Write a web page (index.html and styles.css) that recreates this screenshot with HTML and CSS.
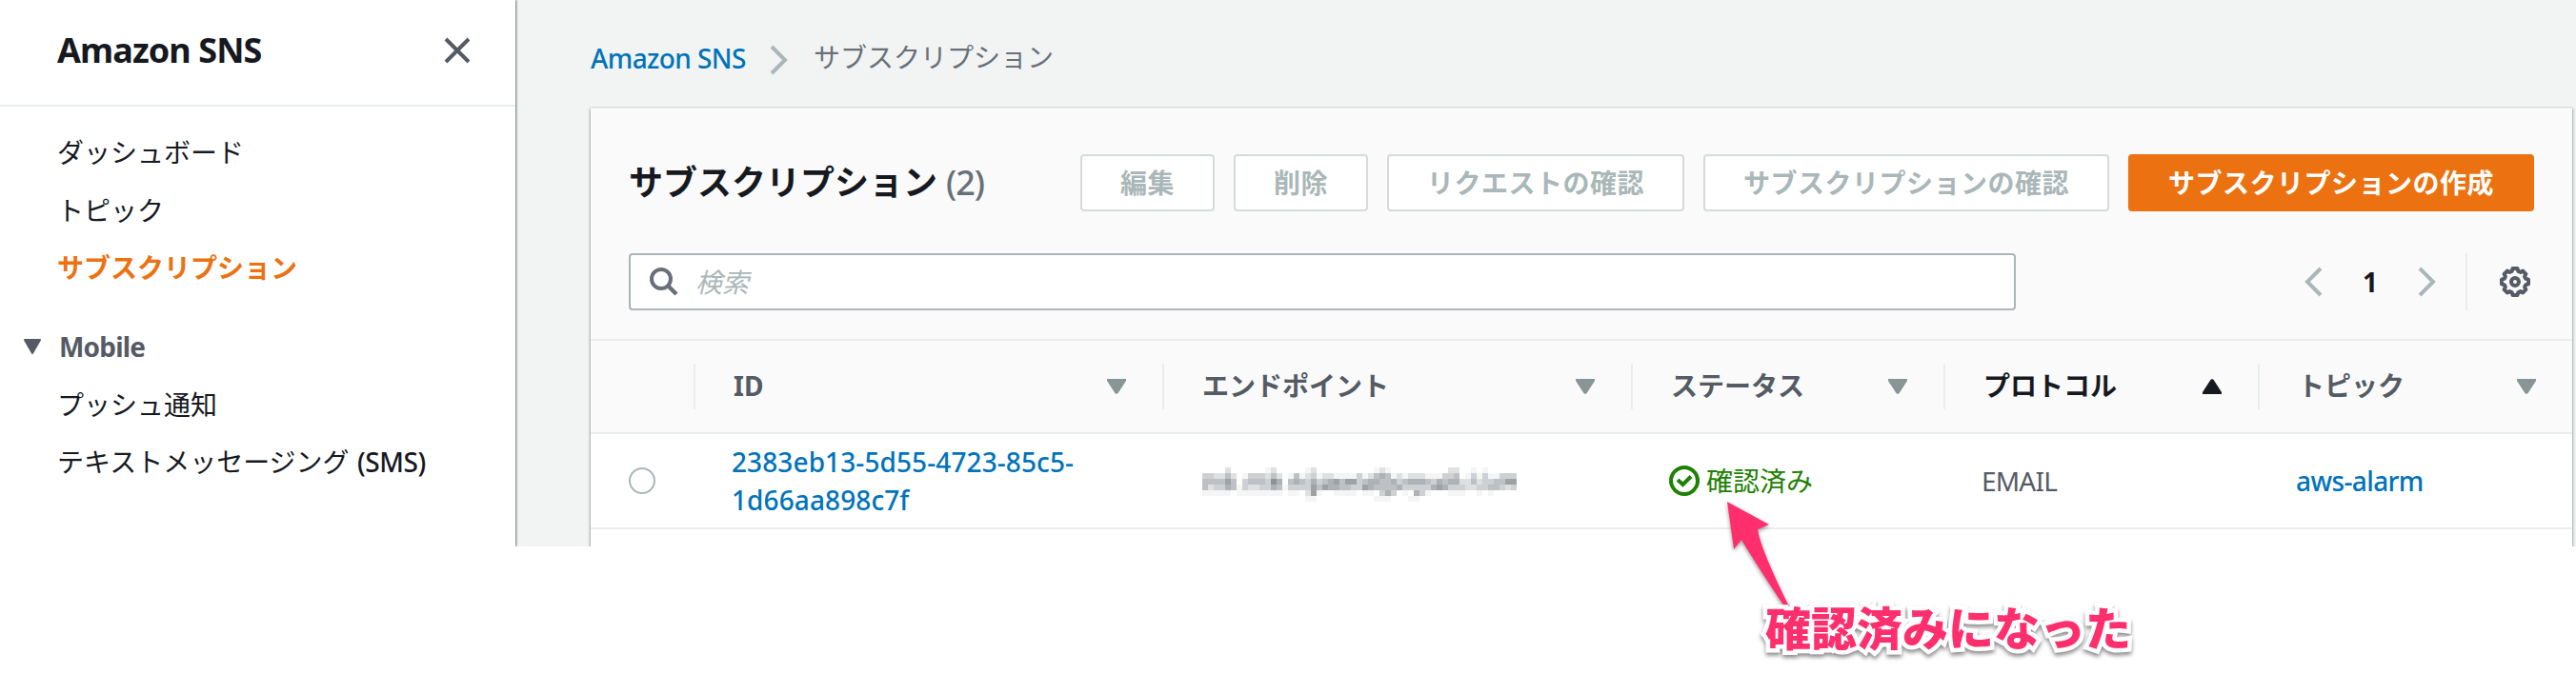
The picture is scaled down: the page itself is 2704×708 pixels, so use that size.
FILE: index.html
```
<!DOCTYPE html>
<html lang="ja">
<head>
<meta charset="utf-8">
<title>Amazon SNS</title>
<link rel="stylesheet" href="styles.css">
</head>
<body>
<div class="app">
  <nav class="sidebar">
    <div class="sidebar-head">
      <span class="service">Amazon SNS</span>
      <svg class="close" width="28" height="28" viewBox="0 0 28 28"><path d="M2 2L26 26M26 2L2 26" fill="none" stroke="#545b64" stroke-width="4"/></svg>
    </div>
    <ul class="nav">
      <li>ダッシュボード</li>
      <li>トピック</li>
      <li class="active">サブスクリプション</li>
    </ul>
    <div class="group">
      <svg width="20" height="16" viewBox="0 0 20 16"><path d="M2 1H18L10 15Z" fill="#545b64" stroke="#545b64" stroke-width="2" stroke-linejoin="round"/></svg>
      <span>Mobile</span>
    </div>
    <ul class="nav sub">
      <li>プッシュ通知</li>
      <li>テキストメッセージング <span class="latin">(SMS)</span></li>
    </ul>
  </nav>
  <main class="main">
    <div class="crumbs">
      <a class="crumb-link">Amazon SNS</a>
      <svg class="crumb-sep" width="20" height="32" viewBox="0 0 20 32"><path d="M2 2L16 16L2 30" fill="none" stroke="#aab7b8" stroke-width="4"/></svg>
      <span>サブスクリプション</span>
    </div>
    <section class="panel">
      <div class="panel-head">
        <h1>サブスクリプション<span class="count">(2)</span></h1>
        <div class="actions">
          <button class="btn edit">編集</button>
          <button class="btn">削除</button>
          <button class="btn">リクエストの確認</button>
          <button class="btn">サブスクリプションの確認</button>
          <button class="btn primary">サブスクリプションの作成</button>
        </div>
      </div>
      <div class="tools">
        <div class="search">
          <svg width="32" height="32" viewBox="0 0 32 32"><circle cx="13" cy="13" r="10" fill="none" stroke="#687078" stroke-width="4"/><path d="M20 20L29 29" stroke="#687078" stroke-width="4.4"/></svg>
          <span>検索</span>
        </div>
        <div class="pager">
          <svg width="20" height="32" viewBox="0 0 20 32"><path d="M18 2L4 16L18 30" fill="none" stroke="#aab7b8" stroke-width="4"/></svg>
          <b>1</b>
          <svg width="20" height="32" viewBox="0 0 20 32"><path d="M2 2L16 16L2 30" fill="none" stroke="#aab7b8" stroke-width="4"/></svg>
        </div>
        <div class="prefs">
          <svg width="32" height="32" viewBox="0 0 32 32" fill="none" stroke="#545b64"><path stroke-width="4" stroke-linejoin="round" d="M13.6 2H18.4L19.4 5L21.6 5.9L24.2 4.6L27.4 7.8L26.1 10.4L27 12.6L30 13.6V18.4L27 19.4L26.1 21.6L27.4 24.2L24.2 27.4L21.6 26.1L19.4 27L18.4 30H13.6L12.6 27L10.4 26.1L7.8 27.4L4.6 24.2L5.9 21.6L5 19.4L2 18.4V13.6L5 12.6L5.9 10.4L4.6 7.8L7.8 4.6L10.4 5.9L12.6 5Z"/><circle cx="16" cy="16" r="4" stroke-width="4"/></svg>
        </div>
      </div>
      <div class="grid thead">
        <div></div>
        <div class="th"><span>ID</span><i class="tri"></i></div>
        <div class="th"><span>エンドポイント</span><i class="tri"></i></div>
        <div class="th"><span>ステータス</span><i class="tri"></i></div>
        <div class="th sorted"><span>プロトコル</span><i class="tri up"></i></div>
        <div class="th last"><span>トピック</span><i class="tri"></i></div>
      </div>
      <div class="grid row">
        <div class="pick"><span class="radio"></span></div>
        <div class="td id"><a>2383eb13-5d55-4723-85c5-<br>1d66aa898c7f</a></div>
        <div class="td"><svg class="mosaic" width="348" height="48" viewBox="0 0 348 48" shape-rendering="crispEdges"></svg></div>
        <div class="td status">
          <svg width="32" height="32" viewBox="0 0 32 32" fill="none" stroke="#1d8102" stroke-width="4"><circle cx="16" cy="16" r="14"/><path d="M9 15L14.5 20L23 11.5"/></svg>
          <span>確認済み</span>
        </div>
        <div class="td email">EMAIL</div>
        <div class="td topic"><a>aws-alarm</a></div>
      </div>
    </section>
  </main>
</div>
<svg class="arrow" width="90" height="120" viewBox="0 0 90 120"><path d="M13 7L57 31L45 36Q48 57 79 119Q78 123 75 120Q46 77 28 47L20 57Z" fill="#ff2f6e"/></svg>
<div class="note">確認済みになった</div>
<script src="mosaic.js"></script>
</body>
</html>
```
FILE: styles.css
```
* { box-sizing: border-box; }
body {
  margin: 0;
  position: relative;
  width: 2704px;
  height: 708px;
  overflow: hidden;
  background: #fff;
  color: #16191f;
  font: 28px/44px "Noto Sans", "Noto Sans CJK JP", sans-serif;
}
ul { list-style: none; margin: 0; padding: 0; }
.app { display: flex; height: 574px; overflow: hidden; background: #f2f3f3; }

.sidebar {
  width: 541px;
  background: #fff;
  box-shadow: 1px 0 2px rgba(0, 28, 36, .6);
  z-index: 1;
}
.sidebar-head {
  height: 112px;
  padding: 0 47px 5px 60px;
  display: flex;
  align-items: center;
  justify-content: space-between;
  border-bottom: 2px solid #eaeded;
}
.service { font-size: 36px; font-weight: 700; letter-spacing: -.9px; }
.nav { padding: 18px 0 0 60px; }
.nav li { height: 60.5px; line-height: 60.5px; white-space: nowrap; }
.nav .active { color: #ec7211; font-weight: 700; }
.nav.sub { padding-top: 9px; }
.latin { margin-left: 1px; font-weight: 500; letter-spacing: -.4px; }
.group {
  height: 44px;
  margin-top: 30px;
  padding-left: 24px;
  display: flex;
  align-items: center;
  gap: 18px;
  font-weight: 700;
  color: #545b64;
}
.group span { letter-spacing: -.8px; }

.main { width: 2163px; padding-left: 79px; }
.crumbs {
  height: 113px;
  padding-top: 9px;
  display: flex;
  align-items: center;
  color: #687078;
}
.crumbs > span { position: relative; top: -1px; }
.crumb-link { width: 162px; letter-spacing: -.6px; white-space: nowrap; }
.crumb-sep { margin: 3px 26px 0; }
a { color: #0073bb; font-weight: 500; }

.panel {
  width: 2080px;
  height: 480px;
  background: #fff;
  border-top: 1px solid #eaeded;
  box-shadow: 0 1px 3px rgba(0, 28, 36, .6);
  clip-path: inset(-1px -4px 0 -4px);
}
.panel-head {
  height: 108px;
  padding: 0 40px;
  display: flex;
  align-items: flex-end;
  justify-content: space-between;
  background: #fafafa;
}
h1 { margin: 0; font-size: 36px; line-height: 60px; font-weight: 700; }
.count { margin-left: 9px; font-weight: 500; color: #687078; letter-spacing: -1px; }
.actions { display: flex; gap: 20px; }
.btn {
  height: 60px;
  padding: 0 40px 3px;
  border: 2px solid #d5dbdb;
  border-radius: 4px;
  background: #fff;
  color: #aab7b8;
  font: 700 28px/52px "Noto Sans CJK JP", sans-serif;
  letter-spacing: .5px;
  white-space: nowrap;
}
.primary { background: #ec7211; border-color: #ec7211; color: #fff; }
.tools {
  height: 134px;
  padding: 0 40px 0 40px;
  display: flex;
  align-items: center;
  background: #fafafa;
}
.search {
  width: 1456px;
  height: 60px;
  margin-top: 14px;
  padding-left: 19px;
  display: flex;
  align-items: center;
  gap: 17px;
  background: #fff;
  border: 2px solid #aab7b8;
  border-radius: 4px;
  color: #aab7b8;
  font-style: italic;
}
.pager { display: flex; align-items: center; gap: 42px; margin: 14px 0 0 302px; }
.pager b { width: 16px; text-align: center; }
.prefs {
  height: 60px;
  margin: 14px 0 0 30px;
  padding-left: 34px;
  display: flex;
  align-items: center;
  border-left: 2px solid #eaeded;
}
.grid { display: grid; grid-template-columns: 108px 492px 492px 328px 330px 330px; align-items: center; }
.thead { height: 100px; background: #fafafa; border-top: 2px solid #eaeded; border-bottom: 2px solid #eaeded; }
.th {
  height: 48px;
  padding: 0 38px 0 40px;
  display: flex;
  align-items: center;
  justify-content: space-between;
  border-left: 2px solid #eaeded;
  font-weight: 700;
  color: #545b64;
  white-space: nowrap;
}
.th span { margin-top: -2px; }
.th.sorted { color: #16191f; }
.tri { width: 20px; height: 16px; background: #879596; clip-path: polygon(0 0, 100% 0, 100% 12%, 58% 94%, 50% 100%, 42% 94%, 0 12%); }
.tri.up { background: #16191f; transform: rotate(180deg); }
.row { height: 100px; background: #fff; border-bottom: 2px solid #eaeded; }
.pick { padding-left: 40px; }
.radio { display: block; width: 28px; height: 28px; border: 2px solid #aab7b8; border-radius: 50%; }
.td { padding-left: 40px; color: #545b64; white-space: nowrap; }
.id { line-height: 40px; letter-spacing: .1px; }
.topic { letter-spacing: -.6px; }
.mosaic { display: block; margin-left: 2px; }
.status { display: flex; align-items: center; gap: 7px; color: #1d8102; }
.email { letter-spacing: -.8px; }

.arrow { position: absolute; left: 1800px; top: 520px; overflow: visible; filter: drop-shadow(0 2px 2px rgba(0, 0, 0, .4)); }
.note {
  position: absolute;
  left: 1853px;
  top: 622px;
  font: 900 48px/70px "Noto Sans CJK JP", sans-serif;
  color: #ff2f6e;
  -webkit-text-stroke: 9px #fff;
  paint-order: stroke fill;
  white-space: nowrap;
  filter: drop-shadow(0 3px 2px rgba(0, 0, 0, .45));
}
```
FILE: mosaic.js
```
// Redacted endpoint: each digit is the darkness of one 6px block.
const rows = [
  "0000200000012000001200000000001210000000000220010100000",
  "3322420133324201412312211113124541212221113340131311333",
  "4444640344437504543534564663455445345554354552242334466",
  "4233541322335413333646554433654444533333565333223344323",
  "1111101111111101102610011110110353010531000111001010000",
  "0000000000000000001100000000001110001100000000000000000"
];
const svg = document.querySelector(".mosaic");
rows.forEach((row, y) => [...row].forEach((level, x) => {
  if (level === "0") return;
  const r = document.createElementNS("http://www.w3.org/2000/svg", "rect");
  r.setAttribute("x", x * 6);
  r.setAttribute("y", y * 6 + 10);
  r.setAttribute("width", 6);
  r.setAttribute("height", 6);
  r.setAttribute("fill", "#545b64");
  r.setAttribute("opacity", level === "1" ? 0.06 : level * 0.095);
  svg.appendChild(r);
}));
```
